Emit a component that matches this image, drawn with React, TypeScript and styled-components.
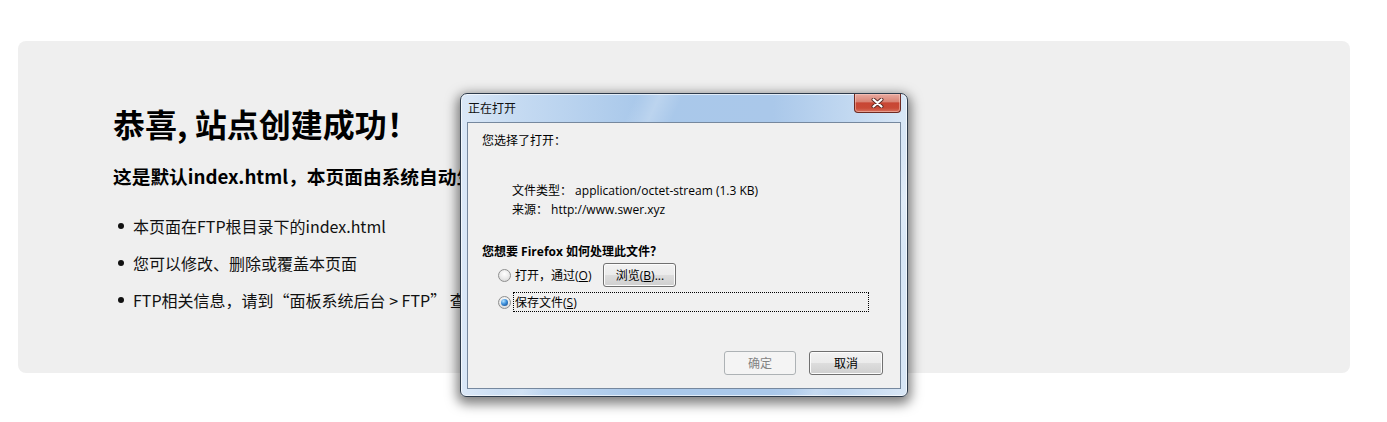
import React from "react";
import styled, { createGlobalStyle } from "styled-components";

const GlobalStyle = createGlobalStyle`
  html, body {
    margin: 0;
    padding: 0;
    background: #ffffff;
  }
  body {
    font-family: "Noto Sans CJK SC", sans-serif;
  }
`;

const Page = styled.div`
  position: relative;
  width: 1387px;
  height: 422px;
  box-sizing: border-box;
  padding: 41px 37px 0 18px;
`;

const Card = styled.section`
  height: 332px;
  box-sizing: border-box;
  padding: 62px 0 0 95px;
  background: #efefef;
  border-radius: 8px;
`;

const Title = styled.h1`
  margin: 0;
  font-size: 32px;
  line-height: 40px;
  font-weight: 700;
  color: #000;
  white-space: nowrap;
  text-spacing-trim: space-all;
`;

const SubTitle = styled.h3`
  margin: 20px 0 0;
  font-size: 18.72px;
  line-height: 26px;
  font-weight: 700;
  color: #000;
  white-space: nowrap;
  text-spacing-trim: space-all;
`;

const List = styled.ul`
  margin: 25px 0 0;
  padding: 0;
  list-style: none;
`;

const Item = styled.li`
  display: flex;
  align-items: center;
  height: 24px;
  font-size: 16px;
  color: #111;
  white-space: nowrap;
  text-spacing-trim: space-all;

  & + & {
    margin-top: 13px;
  }

  &::before {
    content: "";
    width: 6px;
    height: 6px;
    margin: 0 9px 0 5px;
    border-radius: 50%;
    background: #111;
  }
`;

/* ---------- Windows 7 style dialog ---------- */

const Dialog = styled.div`
  position: absolute;
  left: 460px;
  top: 93px;
  width: 448px;
  height: 304px;
  box-sizing: border-box;
  display: flex;
  flex-direction: column;
  padding: 0 6px 7px;
  border: 1px solid #2e3b4b;
  border-radius: 7px 7px 6px 6px;
  background:
    linear-gradient(115deg, rgba(255, 255, 255, 0) 30%, rgba(255, 255, 255, 0.22) 34%, rgba(255, 255, 255, 0) 38%, rgba(255, 255, 255, 0) 80%, rgba(255, 255, 255, 0.2) 84%, rgba(255, 255, 255, 0) 88%),
    linear-gradient(90deg, #dbe8f7 0%, #c6dbf2 12%, #a9c8ea 40%, #aac8ea 70%, #c3d9f1 88%, #d9e7f6 100%);
  box-shadow: inset 0 0 0 1px rgba(255, 255, 255, 0.65), 0 4px 12px 3px rgba(0, 0, 0, 0.5);
  font-family: "Open Sans", "Noto Sans CJK SC", sans-serif;
  font-size: 12px;
  color: #000;
  text-spacing-trim: space-all;
`;

const TitleBar = styled.div`
  height: 28px;
  display: flex;
  align-items: center;
  padding: 0 0 2px 1px;
  box-sizing: border-box;
  font-family: "Noto Sans CJK SC", sans-serif;
  color: #111;
`;

const CloseButton = styled.div`
  position: absolute;
  top: 0;
  right: 6px;
  width: 47px;
  height: 19px;
  box-sizing: border-box;
  display: flex;
  align-items: center;
  justify-content: center;
  border: 1px solid #6e2a22;
  border-top: none;
  border-radius: 0 0 4px 4px;
  background: linear-gradient(180deg, #e9aaa0 0%, #d98576 42%, #c84634 50%, #c94a36 78%, #d87260 100%);
  box-shadow: inset 0 0 0 1px rgba(255, 215, 205, 0.45);
`;

const Panel = styled.div`
  flex: 1;
  display: flex;
  flex-direction: column;
  padding: 9px 0 13px;
  border: 1px solid #76889e;
  background: #f0f0f0;
`;

const Line = styled.div<{ $indent: number; $gap: number; $bold?: boolean }>`
  margin: ${(p) => p.$gap}px 0 0 ${(p) => p.$indent}px;
  line-height: 17px;
  font-weight: ${(p) => (p.$bold ? 700 : 400)};
  white-space: nowrap;
`;

const Details = styled.div`
  margin: 32px 0 0 44px;
  line-height: 19px;
  white-space: nowrap;
`;

const OptionRow = styled.div<{ $gap: number; $height: number }>`
  display: flex;
  align-items: center;
  height: ${(p) => p.$height}px;
  margin-top: ${(p) => p.$gap}px;
  padding-left: 30px;
  white-space: nowrap;
`;

const Radio = styled.span<{ $checked?: boolean }>`
  position: relative;
  flex: none;
  width: 13px;
  height: 13px;
  box-sizing: border-box;
  border: 1px solid #8e8f8f;
  border-radius: 50%;
  background: radial-gradient(circle at 50% 35%, #ffffff 0%, #e9e9e9 55%, #cfcfcf 100%);

  &::after {
    content: "";
    display: ${(p) => (p.$checked ? "block" : "none")};
    position: absolute;
    left: 2px;
    top: 2px;
    width: 7px;
    height: 7px;
    border-radius: 50%;
    background: radial-gradient(circle at 35% 30%, #b5e4ff 0%, #3d8fdb 45%, #113f7a 100%);
  }
`;

const OptionText = styled.span`
  margin-left: 4px;
`;

const FocusLabel = styled.span`
  display: flex;
  align-items: center;
  width: 356px;
  height: 20px;
  box-sizing: border-box;
  margin-left: 2px;
  padding-left: 1px;
  border: 1px dotted #000;
`;

const Button = styled.button<{ $disabled?: boolean; $width: number }>`
  width: ${(p) => p.$width}px;
  height: 24px;
  padding: 0;
  box-sizing: border-box;
  border: 1px solid ${(p) => (p.$disabled ? "#adb2b5" : "#707070")};
  border-radius: 3px;
  font-family: inherit;
  font-size: 12px;
  color: ${(p) => (p.$disabled ? "#838383" : "#000")};
  background: ${(p) =>
    p.$disabled
      ? "#f4f4f4"
      : "linear-gradient(180deg, #f2f2f2 0%, #ebebeb 48%, #dddddd 52%, #cfcfcf 100%)"};
  box-shadow: inset 0 0 0 1px ${(p) => (p.$disabled ? "#f4f4f4" : "#fcfcfc")};
`;

const BrowseButton = styled(Button)`
  margin-left: 12px;
`;

const Footer = styled.div`
  margin-top: auto;
  display: flex;
  justify-content: flex-end;
  gap: 13px;
  padding-right: 17px;
`;

const CloseIcon = () => (
  <svg width="13" height="10" viewBox="0 0 13 10">
    <path d="M2.5 1.5 L10.5 8.5 M10.5 1.5 L2.5 8.5" stroke="#5b2a24" strokeWidth="4" strokeLinecap="round" />
    <path d="M2.5 1.5 L10.5 8.5 M10.5 1.5 L2.5 8.5" stroke="#ffffff" strokeWidth="2.2" strokeLinecap="round" />
  </svg>
);

const OpenDialog = () => (
  <Dialog>
    <TitleBar>正在打开</TitleBar>
    <CloseButton>
      <CloseIcon />
    </CloseButton>
    <Panel>
      <Line $indent={14} $gap={0}>您选择了打开：</Line>
      <Details>
        <div>文件类型： application/octet-stream (1.3 KB)</div>
        <div>来源： http://www.swer.xyz</div>
      </Details>
      <Line $indent={14} $gap={24} $bold>
        您想要 Firefox 如何处理此文件？
      </Line>
      <OptionRow $gap={3} $height={24}>
        <Radio />
        <OptionText>
          打开，通过(<u>O</u>)
        </OptionText>
        <BrowseButton $width={73}>
          浏览(<u>B</u>)...
        </BrowseButton>
      </OptionRow>
      <OptionRow $gap={5} $height={20}>
        <Radio $checked />
        <FocusLabel>
          保存文件(<u>S</u>)
        </FocusLabel>
      </OptionRow>
      <Footer>
        <Button $width={72} $disabled>
          确定
        </Button>
        <Button $width={74}>取消</Button>
      </Footer>
    </Panel>
  </Dialog>
);

const App = () => {
  return (
    <Page>
      <GlobalStyle />
      <Card>
        <Title>恭喜, 站点创建成功！</Title>
        <SubTitle>这是默认index.html，本页面由系统自动生成</SubTitle>
        <List>
          <Item>本页面在FTP根目录下的index.html</Item>
          <Item>您可以修改、删除或覆盖本页面</Item>
          <Item>FTP相关信息，请到“面板系统后台 &gt; FTP” 查看</Item>
        </List>
      </Card>
      <OpenDialog />
    </Page>
  );
};

export default App;
